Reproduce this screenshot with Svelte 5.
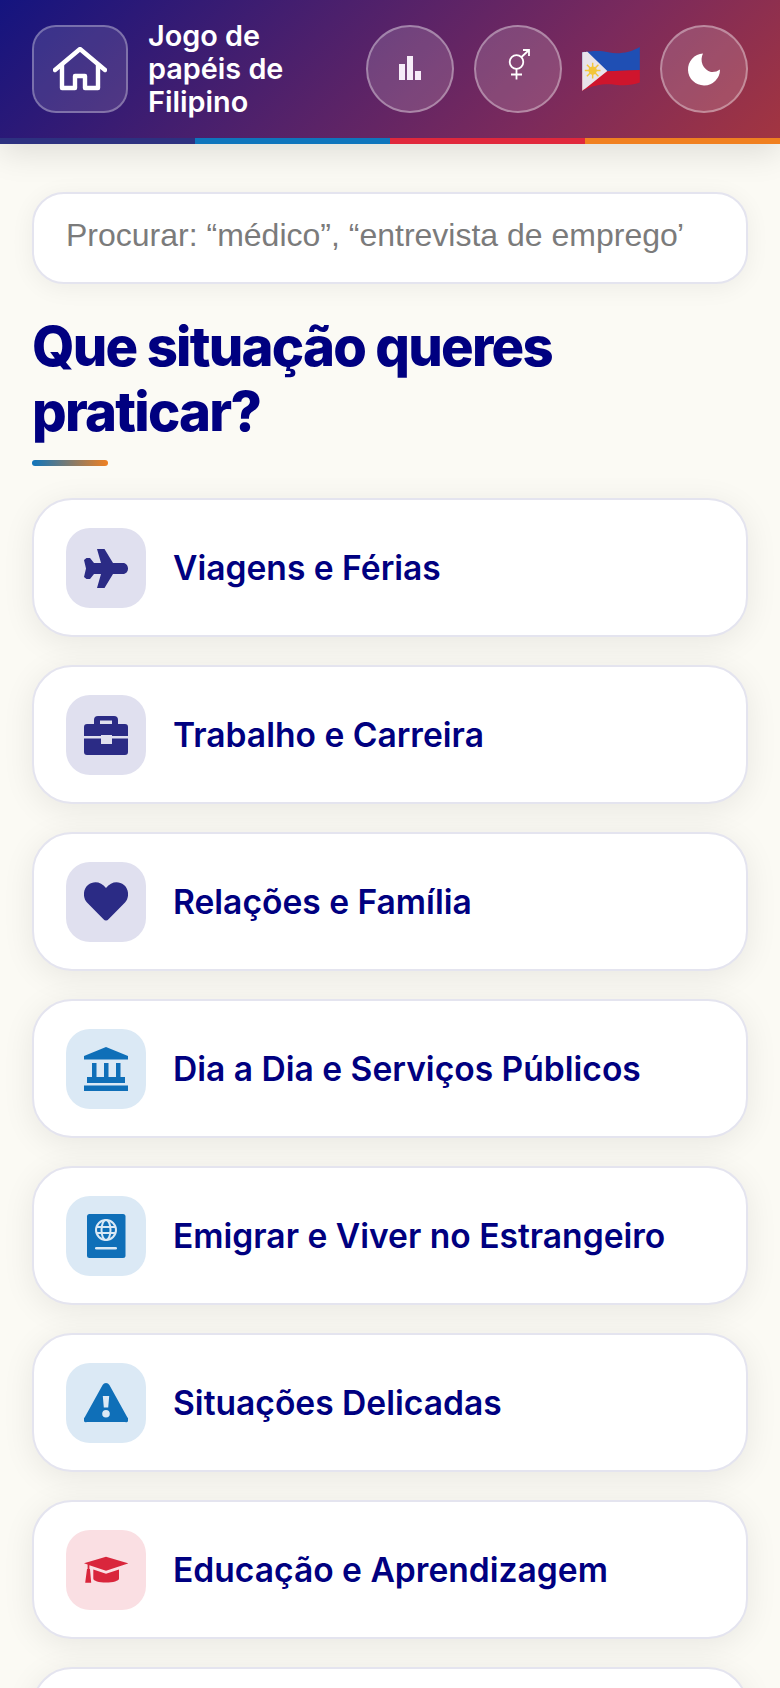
<script lang="ts">
	const NAVY = { bg: "#e0e0ef", fg: "#2b2b85" };
	const BLUE = { bg: "#dbe9f5", fg: "#0f6fb8" };
	const RED = { bg: "#fadfe3", fg: "#d9263c" };

	// the eighth card only peeks in at the bottom of the page
	const SCENARIOS = [
		{ label: "Viagens e Férias", icon: "plane", tone: NAVY },
		{ label: "Trabalho e Carreira", icon: "briefcase", tone: NAVY },
		{ label: "Relações e Família", icon: "heart", tone: NAVY },
		{ label: "Dia a Dia e Serviços Públicos", icon: "bank", tone: BLUE },
		{ label: "Emigrar e Viver no Estrangeiro", icon: "passport", tone: BLUE },
		{ label: "Situações Delicadas", icon: "warning", tone: BLUE },
		{ label: "Educação e Aprendizagem", icon: "cap", tone: RED },
		{ label: "", icon: "", tone: RED }
	];

	let query = $state("");
</script>

<div class="page">
	<header class="topbar">
		<div class="topbar-row">
			<button class="home-btn" aria-label="Início">
				<svg width="54" height="44" viewBox="0 0 54 44" fill="none" stroke="#fff" stroke-width="4.4" stroke-linejoin="round" stroke-linecap="round">
					<path d="M2 23 27 2l25 21" />
					<path d="M9 18v23h13V29h10v12h13V18" />
				</svg>
			</button>
			<div class="title">Jogo de papéis de Filipino</div>
			<div class="actions">
				<button class="round-btn" aria-label="Estatísticas">
					<svg class="bars" width="24" height="24" viewBox="0 0 24 24" fill="#f6ecf8">
						<rect x="1" y="8" width="6" height="16" />
						<rect x="9" y="0" width="6" height="24" />
						<rect x="17" y="15" width="6" height="9" />
					</svg>
				</button>
				<button class="round-btn" aria-label="Género">
					<svg class="gender" width="22" height="31" viewBox="0 0 22 31" fill="none" stroke="#fff" stroke-width="1.8">
						<circle cx="8.500" cy="13" r="6.800" />
						<path d="M13.500 8 21 1M15 1h6v6M8.500 20v10.500M3 25.500h11" />
					</svg>
				</button>
				<svg class="flag" width="58" height="44" viewBox="1 0 55 42" aria-label="Bandeira">
					<path d="M1 5c8-1 17-2 25 0s20 1 30-5v22L1 24z" fill="#1f4fb4" />
					<path d="M1 24l55-2v12c-8 3-16 3-24 2-9-1-20 0-31 6z" fill="#cf152d" />
					<path d="M1 5c3-.4 4-.4 5-.5L25 23 5 39c-1 .8-3 2-4 3z" fill="#e9e4ea" />
					<path d="M11 15v15M3.500 22.500h15M5.500 17l11 11M16.500 17l-11 11" stroke="#f3c63a" stroke-width="1.400" />
					<circle cx="11" cy="22.500" r="4" fill="#f3c63a" />
				</svg>
				<button class="round-btn" aria-label="Modo escuro">
					<svg width="34" height="34" viewBox="0 0 34 34" fill="#fff">
						<path d="M16 1.500A16 16 0 1 0 33 17.500 13 13 0 0 1 24 20 13 13 0 0 1 16 1.500z" />
					</svg>
				</button>
			</div>
		</div>
		<div class="stripe"></div>
	</header>

	<main class="content">
		<input class="search" type="text" bind:value={query} placeholder="Procurar: “médico”, “entrevista de emprego”..." />

		<h1>Que situação queres praticar?</h1>
		<div class="underline"></div>

		<div class="cards">
			{#each SCENARIOS as item}
				<button class="card">
					{#if item.icon}
						<span class="card-icon" style="background: {item.tone.bg}; color: {item.tone.fg}">
							<svg width="44" height="44" viewBox="0 0 44 44" fill="currentColor">
								{#if item.icon === "plane"}
									<path d="M13 3h7.500L29 17h10c3 0 5 2.500 5 5.500S42 28 39 28H29l-8.500 14H13l4-14h-7l-4 5H2.500L0 31l2-8.500L0 14l2.500-2H6l4 5h7z" />
								{:else if item.icon === "briefcase"}
									<path fill-rule="evenodd" d="M10 11V7a4 4 0 0 1 4-4h16a4 4 0 0 1 4 4v4h7a3 3 0 0 1 3 3v9H28v-1H17v1H0v-9a3 3 0 0 1 3-3zm6-3.500V11h12V7.500zM0 25.500h17V31h11v-5.500h16V39a3 3 0 0 1-3 3H3a3 3 0 0 1-3-3z" />
								{:else if item.icon === "heart"}
									<path d="M22 40.500c-1 0-1.800-.4-2.500-1.200L3 22.500C-1.500 17.500-1 9 4 5c5.500-4.300 13-3.500 18 3 5-6.500 12.500-7.300 18-3 5 4 5.500 12.500 1 17.500L24.500 39.300c-.7.8-1.500 1.200-2.500 1.200z" />
								{:else if item.icon === "bank"}
									<path d="M22 0 44 9v3.500H0V9zM8 16h4.500v14H8zM20 16h4.500v14H20zM32 16h4.500v14H32zM3 30h38v6H3zM0 38.500h44V44H0z" />
								{:else if item.icon === "passport"}
									<rect x="3" y="0" width="38.500" height="44" rx="2.500" />
									<g fill="none" stroke={item.tone.bg} stroke-width="2">
										<circle cx="22" cy="16" r="10" />
										<ellipse cx="22" cy="16" rx="4.500" ry="10" />
										<path d="M12 13h20M12 19h20" />
									</g>
									<rect x="11" y="33" width="22" height="2.600" rx="1.300" fill={item.tone.bg} />
								{:else if item.icon === "warning"}
									<path fill-rule="evenodd" d="M18.600 4a4 4 0 0 1 6.800 0l18 32.500a2.500 2.500 0 0 1-2.100 4.500H2.700a2.500 2.500 0 0 1-2.100-4.500zM18.800 15l1 11.500h4.400l1-11.500zM22 29a3.800 3.800 0 1 0 0 7.600 3.800 3.800 0 0 0 0-7.600z" />
								{:else if item.icon === "cap"}
									<path d="M22 8.700 44.300 15.300 22 22.700 5.400 17.200V21h.6L7.200 34.700H1.200L3 21h.6v-4.400L0 15.300zM9.300 21.500 22 25.800l13-4.300v9c0 2.500-6 4-13 4s-12.700-1.500-12.700-4z" />
								{/if}
							</svg>
						</span>
						<span class="card-label">{item.label}</span>
					{/if}
				</button>
			{/each}
		</div>
	</main>
</div>

<style>
	:global(body) {
		background: #fbfaf4;
	}

	.page {
		height: 1688px;
		overflow: hidden;
		font-family: Inter, "Liberation Sans", sans-serif;
	}

	.topbar {
		background: linear-gradient(135deg, #14147f 0%, #7b2a5c 70%, #a33540 100%);
		box-shadow: 0 8px 32px rgba(0, 0, 0, 0.12);
	}

	.topbar-row {
		height: 138px;
		padding: 0 32px;
		box-sizing: border-box;
		display: flex;
		align-items: center;
		gap: 20px;
	}

	.home-btn {
		width: 96px;
		height: 88px;
		flex: none;
		display: flex;
		align-items: center;
		justify-content: center;
		padding: 0;
		border-radius: 24px;
		background: rgba(255, 255, 255, 0.12);
		border: 2px solid rgba(255, 255, 255, 0.3);
	}

	.title {
		flex: 1;
		min-width: 0;
		margin-bottom: 2px;
		font-size: 28.8px;
		line-height: 33px;
		font-weight: 600;
		color: #fff;
	}

	.actions {
		display: flex;
		align-items: center;
		gap: 20px;
	}

	.round-btn {
		width: 88px;
		height: 88px;
		display: flex;
		align-items: center;
		justify-content: center;
		padding: 0;
		border-radius: 50%;
		background: rgba(255, 255, 255, 0.15);
		border: 2px solid rgba(255, 255, 255, 0.35);
	}

	.bars {
		margin-bottom: 3px;
	}

	.gender {
		margin-bottom: 10px;
		margin-left: 2px;
	}

	.stripe {
		height: 6px;
		background: linear-gradient(90deg, #2d3180 25%, #0f75bc 25% 50%, #e0283c 50% 75%, #f08020 75%);
	}

	.content {
		padding: 48px 32px 0;
	}

	.search {
		display: block;
		width: 100%;
		height: 92px;
		box-sizing: border-box;
		padding: 0 62px 6px 32px;
		border: 2px solid #e4e4ef;
		border-radius: 32px;
		background: #fff;
		font-family: "Liberation Sans", sans-serif;
		font-size: 32px;
		outline: none;
		box-shadow: 0 4px 24px rgba(0, 0, 0, 0.06);
	}

	.search::placeholder {
		color: #7b7b7b;
		opacity: 1;
	}

	h1 {
		margin: 30px 0 0;
		font-size: 54.4px;
		line-height: 65px;
		font-weight: 800;
		letter-spacing: -1.75px;
		color: #000080;
	}

	.underline {
		width: 76px;
		height: 6px;
		margin-top: 16px;
		border-radius: 3px;
		background: linear-gradient(90deg, #0f75bc, #f08020);
	}

	.cards {
		margin-top: 32px;
		display: flex;
		flex-direction: column;
		gap: 28px;
	}

	.card {
		height: 139px;
		flex: none;
		display: flex;
		align-items: center;
		gap: 27px;
		padding: 0 32px;
		box-sizing: border-box;
		border: 2px solid #e4e4ef;
		border-radius: 40px;
		background: #fff;
		text-align: left;
		font-family: inherit;
		box-shadow: 0 6px 32px rgba(0, 0, 0, 0.08);
	}

	.card-icon {
		width: 80px;
		height: 80px;
		flex: none;
		display: flex;
		align-items: center;
		justify-content: center;
		border-radius: 24px;
	}

	.card-label {
		font-size: 33.6px;
		font-weight: 600;
		color: #000080;
	}
</style>
